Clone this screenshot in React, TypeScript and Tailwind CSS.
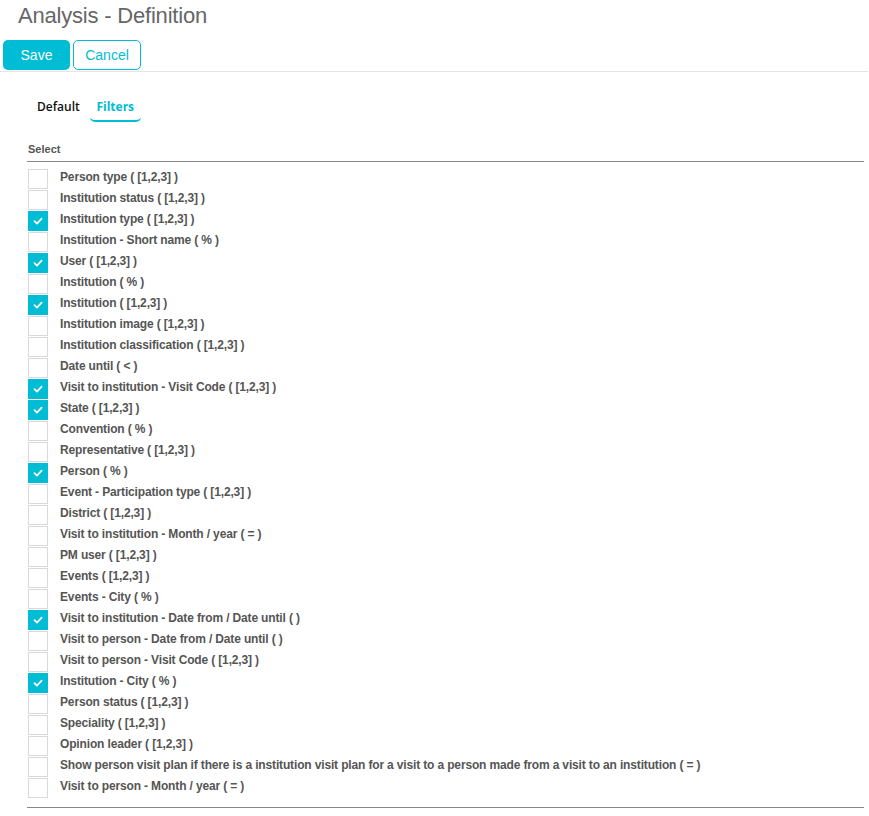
import React from "react";

const items: [string, boolean][] = [
  ["Person type ( [1,2,3] )", false],
  ["Institution status ( [1,2,3] )", false],
  ["Institution type ( [1,2,3] )", true],
  ["Institution - Short name ( % )", false],
  ["User ( [1,2,3] )", true],
  ["Institution ( % )", false],
  ["Institution ( [1,2,3] )", true],
  ["Institution image ( [1,2,3] )", false],
  ["Institution classification ( [1,2,3] )", false],
  ["Date until ( < )", false],
  ["Visit to institution - Visit Code ( [1,2,3] )", true],
  ["State ( [1,2,3] )", true],
  ["Convention ( % )", false],
  ["Representative ( [1,2,3] )", false],
  ["Person ( % )", true],
  ["Event - Participation type ( [1,2,3] )", false],
  ["District ( [1,2,3] )", false],
  ["Visit to institution - Month / year ( = )", false],
  ["PM user ( [1,2,3] )", false],
  ["Events ( [1,2,3] )", false],
  ["Events - City ( % )", false],
  ["Visit to institution - Date from / Date until ( )", true],
  ["Visit to person - Date from / Date until ( )", false],
  ["Visit to person - Visit Code ( [1,2,3] )", false],
  ["Institution - City ( % )", true],
  ["Person status ( [1,2,3] )", false],
  ["Speciality ( [1,2,3] )", false],
  ["Opinion leader ( [1,2,3] )", false],
  ["Show person visit plan if there is a institution visit plan for a visit to a person made from a visit to an institution ( = )", false],
  ["Visit to person - Month / year ( = )", false],
];

export default function App() {
  return (
    <div className="w-[869px] h-[816px] bg-white font-['Liberation_Sans',Arial,sans-serif] overflow-hidden">
      <div className="pl-[18px] pt-[3px] h-[40px] text-[22px] leading-[26px] text-[#666] tracking-[-0.2px]">Analysis - Definition</div>
      <div className="flex gap-[3px] pl-[3px] h-[31px] items-start">
        <button className="w-[67px] h-[30px] rounded-[5px] bg-[#00bcd4] text-white text-[14px]">Save</button>
        <button className="w-[68px] h-[30px] rounded-[5px] border border-[#00bcd4] text-[#00bcd4] text-[14px] bg-white">Cancel</button>
      </div>
      <div className="h-px bg-[#e5e5e5] w-[868px]" />
      <div className="flex pl-[29px] pt-[26px] h-[67px] font-['Open_Sans',sans-serif] text-[12px]">
        <div className="px-[8px] text-[#111] font-semibold leading-[18px]">Default</div>
        <div className="ml-[2px] w-[51px] h-[24px] text-center text-[#00bcd4] font-bold leading-[18px] border-b-2 border-[#00bcd4] rounded-b-[5px]">Filters</div>
      </div>
      <div className="pl-[27px] w-[864px]">
        <div className="pl-[1px] text-[11px] font-bold text-[#555] leading-[20px] h-[20px] mb-[2px]">Select</div>
        <div className="h-px bg-[#888]" />
        <div className="pt-[7px] pl-[1px]">
          {items.map(([label, checked], i) => (
            <div key={i} className="flex items-start h-[21px]">
              {checked ? (
                <div className="w-[20px] h-[20px] bg-[#00bcd4] flex items-center justify-center shrink-0">
                  <svg width="12" height="12" viewBox="0 0 12 12">
                    <path d="M2.5 6.2 L5 8.6 L9.6 3.6" fill="none" stroke="white" strokeWidth="1.8" strokeLinecap="round" strokeLinejoin="round" />
                  </svg>
                </div>
              ) : (
                <div className="w-[20px] h-[20px] border border-[#d9d9d9] bg-white shrink-0" />
              )}
              <span className="ml-[12px] text-[12px] leading-[16px] font-bold text-[#555] whitespace-nowrap tracking-[-0.15px]">{label}</span>
            </div>
          ))}
        </div>
        <div className="h-px bg-[#888] mt-[8px]" />
      </div>
    </div>
  );
}
